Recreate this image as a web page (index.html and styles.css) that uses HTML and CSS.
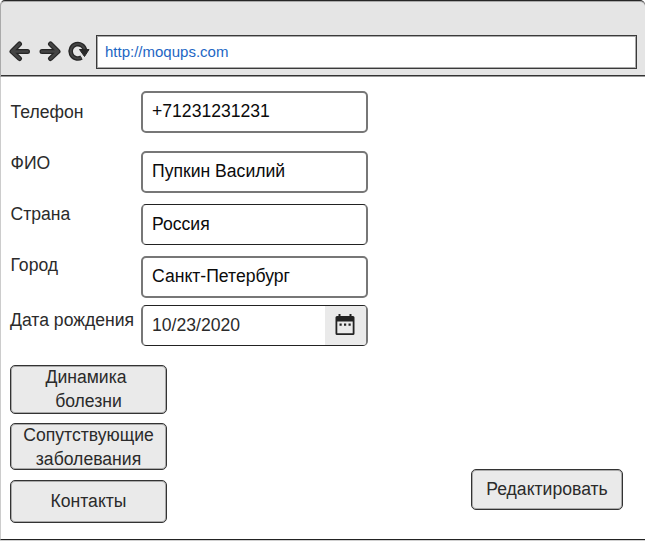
FILE: index.html
```html
<!DOCTYPE html>
<html lang="ru">
<head>
<meta charset="utf-8">
<title>Профиль</title>
<link rel="stylesheet" href="styles.css">
</head>
<body>
<div class="window">
  <header class="toolbar">
    <svg class="nav" width="82" height="22" viewBox="0 0 82 22">
      <g fill="none" stroke="#262626" stroke-width="5" stroke-linecap="round" stroke-linejoin="round">
        <path d="M11.500 4L4 11.500l7.500 7M4.500 11.500h15"/>
        <path d="M42.500 4L50 11.500l-7.500 7M34 11.500h15"/>
      </g>
      <g fill="none" stroke="#444" stroke-width="2.600" stroke-linecap="round" stroke-linejoin="round">
        <path d="M11.500 4L4 11.500l7.500 7M4.500 11.500h15"/>
        <path d="M42.500 4L50 11.500l-7.500 7M34 11.500h15"/>
      </g>
      <path d="M73.500 17.500A7.200 7.200 0 1 1 77 10.500" fill="none" stroke="#262626" stroke-width="4.600"/>
      <path d="M73.500 17.500A7.200 7.200 0 1 1 77 10.500" fill="none" stroke="#444" stroke-width="2"/>
      <path d="M71.500 9.500h9.500l-4.500 7z" fill="#2c2c2c" stroke="#262626" stroke-linejoin="round"/>
    </svg>
    <div class="address">http://moqups.com</div>
  </header>
  <main class="content">
    <div class="form">
      <div class="labels">
        <span class="phone">Телефон</span>
        <span class="name">ФИО</span>
        <span class="country">Страна</span>
        <span class="city">Город</span>
        <span class="birth">Дата рождения</span>
      </div>
      <div class="fields">
        <div class="field phone-field"><span>+71231231231</span></div>
        <div class="field name-field"><span>Пупкин Василий</span></div>
        <div class="field crisp country-field"><span>Россия</span></div>
        <div class="field city-field"><span>Санкт-Петербург</span></div>
        <div class="field crisp date-field"><span>10/23/2020</span>
          <div class="picker">
            <svg width="20" height="24" viewBox="0 0 20 24">
              <path fill="#222" d="M2 3h1.500V1h2v2h9V1h2v2H18q1.500 0 1.500 1.500v16q0 1.500-1.500 1.500H2Q.5 22 .5 20.500v-16Q.5 3 2 3zM2.300 8.500v11.700h15.400V8.500z" fill-rule="evenodd"/>
              <path fill="#222" d="M4.500 10.500h2.200v2.200H4.500zM9 10.500h2.200v2.200H9zM13.500 10.500h2.200v2.200h-2.200z"/>
            </svg>
          </div>
        </div>
      </div>
    </div>
    <div class="actions">
      <div class="links">
        <div class="button dynamics"><span>Динамика&nbsp;<br>болезни</span></div>
        <div class="button diseases"><span>Сопутствующие<br>заболевания</span></div>
        <div class="button contacts"><span>Контакты</span></div>
      </div>
      <div class="button edit"><span>Редактировать</span></div>
    </div>
  </main>
</div>
</body>
</html>
```
FILE: styles.css
```css
* { box-sizing: border-box; }
body {
  margin: 0;
  background: #fff;
  font-family: "Liberation Sans", Arial, sans-serif;
  font-size: 17.6px;
  color: #2b2b2b;
  overflow: hidden;
}
.window {
  height: 541px;
  display: flex;
  flex-direction: column;
  border-bottom: 1px solid #d0d0d0;
}
.toolbar {
  height: 77px;
  display: flex;
  align-items: flex-start;
  background: #e5e5e5;
  border-top: 1px solid #262626;
  border-bottom: 1px solid #999;
  border-left: 1px solid #aaa;
  border-radius: 5px 5px 0 0;
  box-shadow: inset 0 1px #aaa, inset 0 -1px #333;
}
.nav { margin: 39px 0 0 7px; flex: none; }
.address {
  width: 541px;
  height: 34px;
  margin: 34px 0 0 6px;
  padding-left: 8px;
  line-height: 31px;
  font-size: 15px;
  color: #1d66c4;
  background: #fff;
  border: 1px solid #3a3a3a;
  box-shadow: inset 0 0 0 1px #aaa;
}
.content {
  height: 463px;
  border-left: 1px solid #ccc;
  border-bottom: 1px solid #222;
}
.form { display: flex; height: 270px; }
.labels {
  width: 140px;
  padding: 23px 0 0 9.5px;
  display: flex;
  flex-direction: column;
  line-height: 24px;
  white-space: nowrap;
}
.name, .country, .city { margin-top: 27px; }
.birth { margin: 31px 0 0 -0.5px; }
.fields { width: 227px; padding-top: 14px; }
.field {
  height: 42px;
  display: flex;
  align-items: center;
  padding-left: 9px;
  line-height: 20px;
  border: 2px solid #777;
  border-radius: 5px;
  color: #0b0b0b;
  overflow: hidden;
}
.field > span { padding-bottom: 2px; }
.crisp { height: 41px; border-top: 1px solid #222; border-bottom: 1px solid #222; }
.name-field { margin-top: 18px; }
.country-field { margin-top: 11px; }
.city-field { margin-top: 11px; }
.date-field { margin-top: 7px; color: #2b2b2b; }
.picker {
  width: 41px;
  height: 100%;
  margin-left: auto;
  padding: 0 2px 1px 0;
  display: flex;
  align-items: center;
  justify-content: center;
  background: #eaeaea;
}
.actions {
  display: flex;
  justify-content: space-between;
  padding: 18px 22px 0 9px;
}
.links { width: 157px; }
.button {
  display: flex;
  align-items: center;
  justify-content: center;
  padding-bottom: 2px;
  line-height: 24px;
  text-align: center;
  background: #eaeaea;
  border: 1px solid #333;
  border-radius: 5px;
  box-shadow: inset 0 0 0 1px #aaa;
}
.dynamics { height: 49px; }
.diseases { height: 47px; margin-top: 9px; padding-bottom: 0; }
.contacts { height: 43px; margin-top: 10px; }
.edit { width: 152px; height: 41px; margin-top: 104px; }
```
